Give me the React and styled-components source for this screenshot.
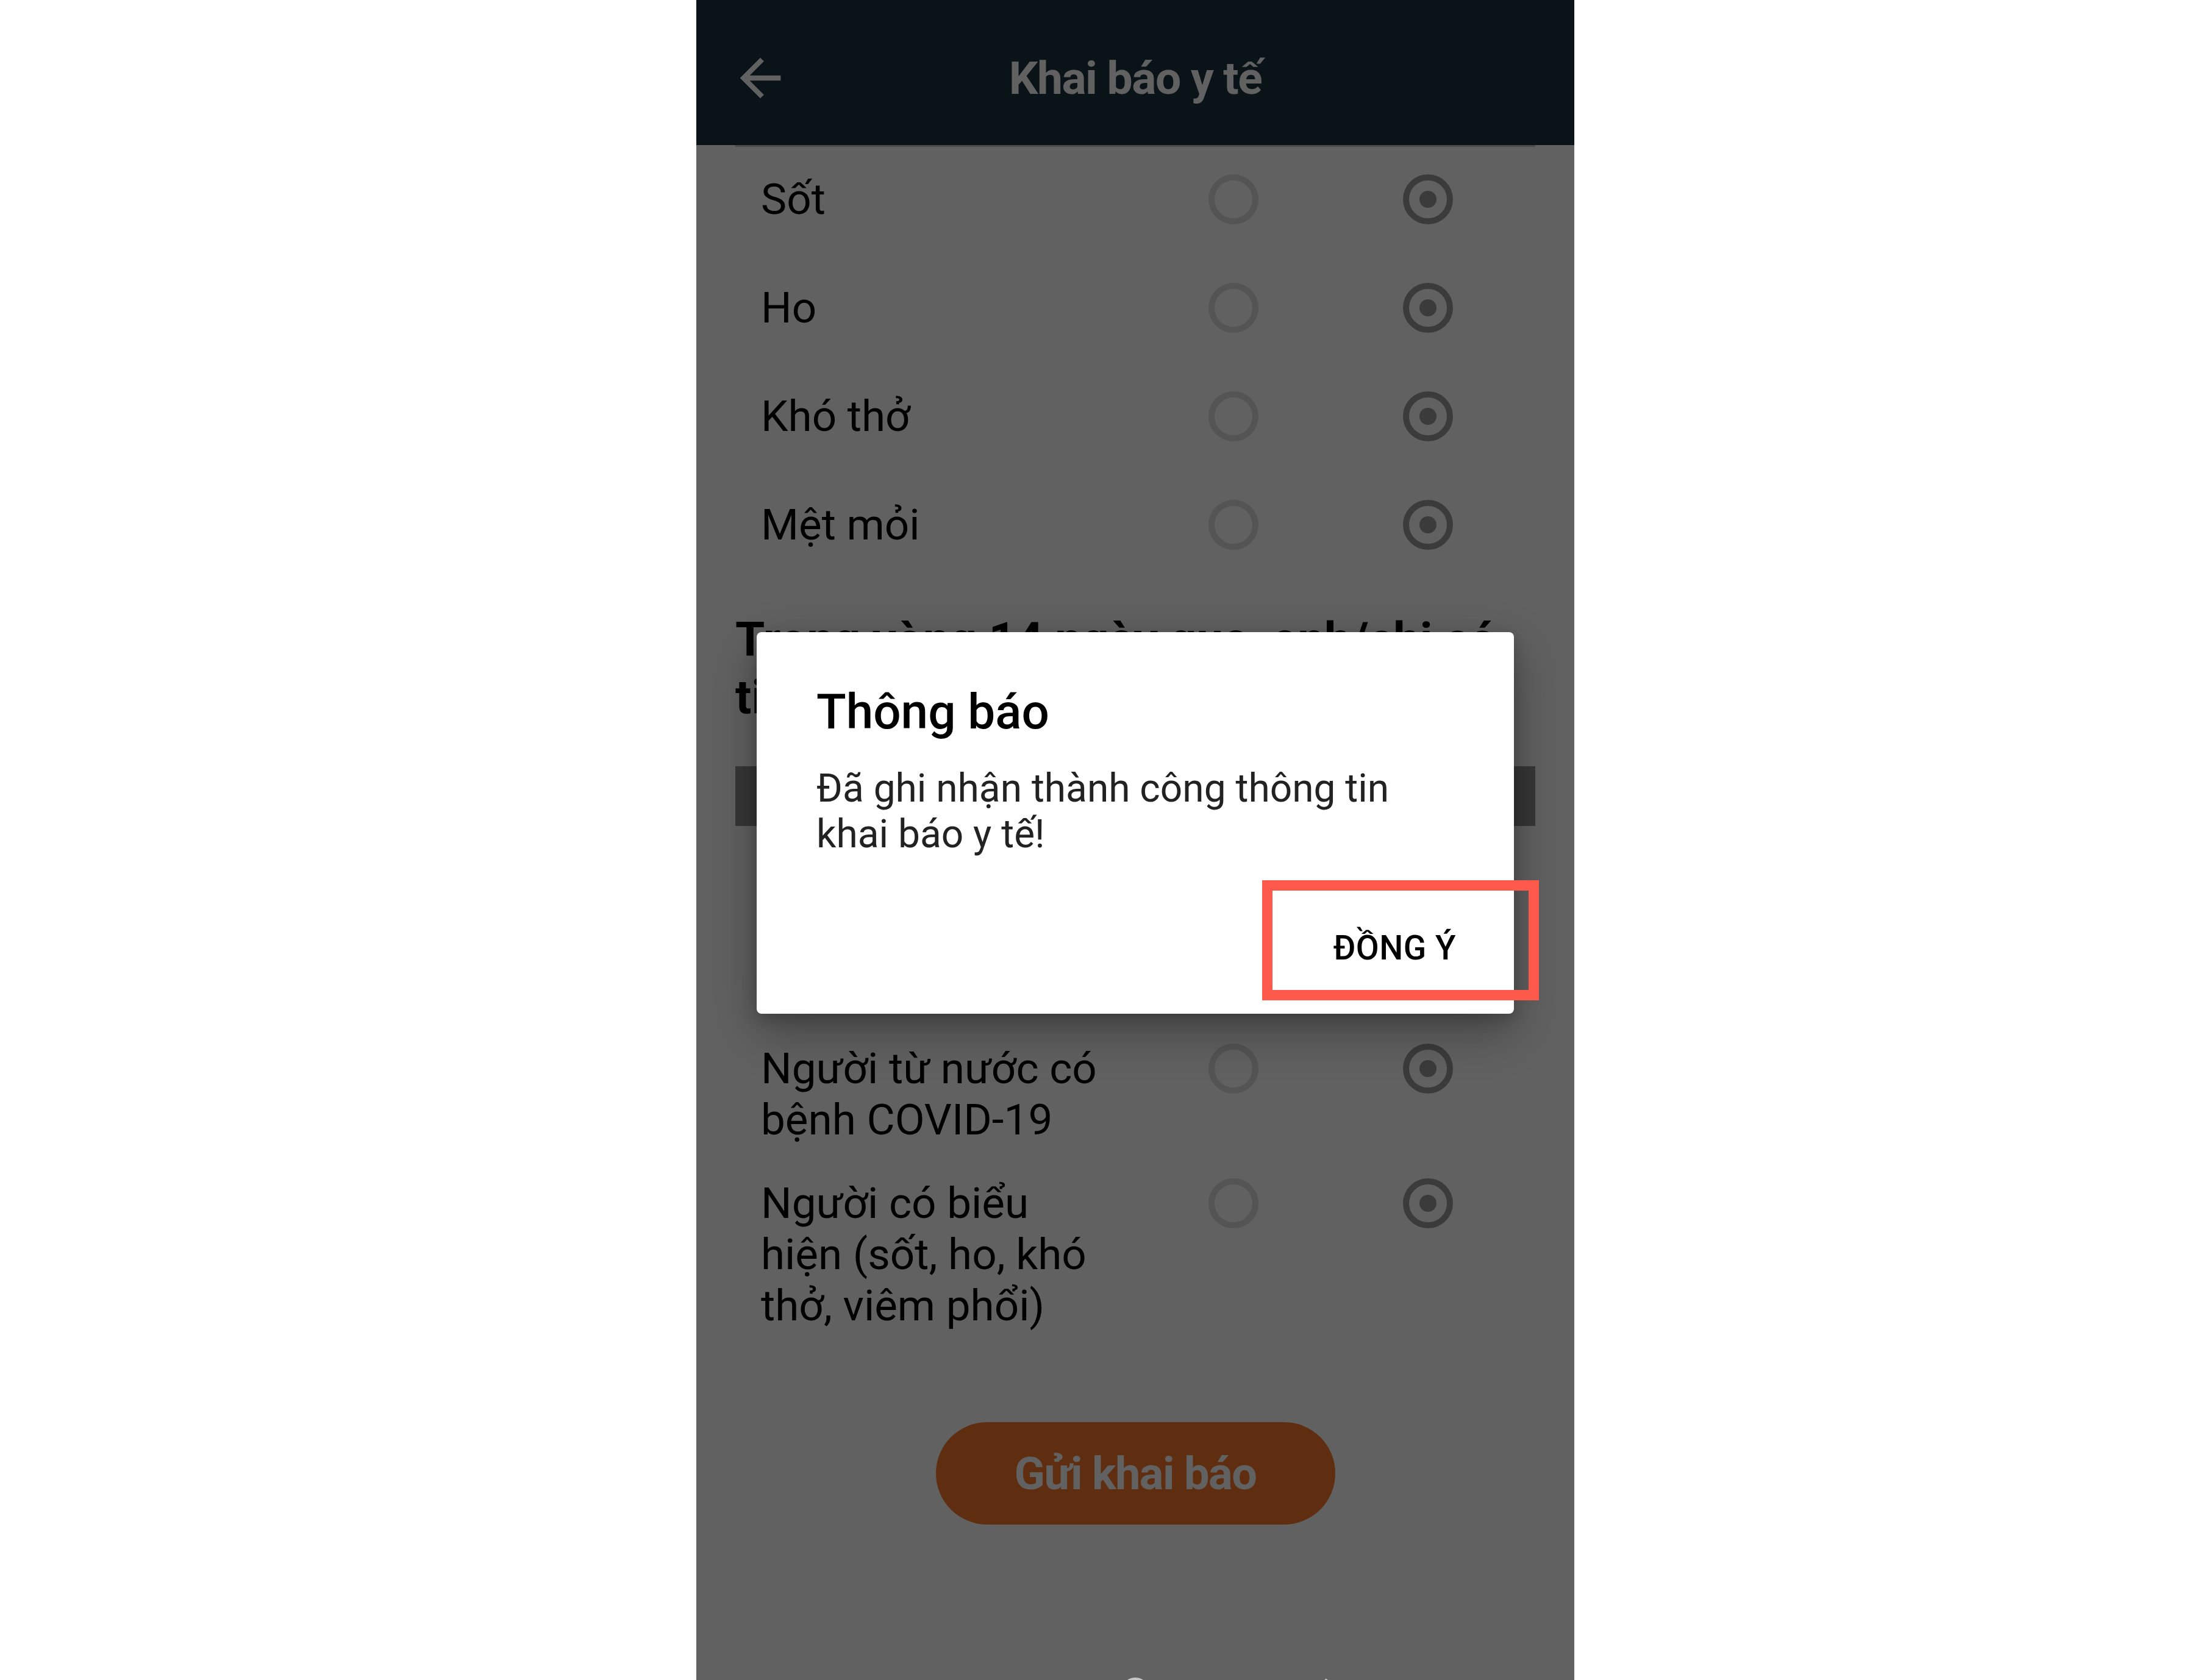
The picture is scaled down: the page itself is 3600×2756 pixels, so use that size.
import React from "react";
import styled, { createGlobalStyle } from "styled-components";

const GlobalStyle = createGlobalStyle`
  body {
    margin: 0;
    background: #ffffff;
    font-family: Roboto, "Noto Sans", "Liberation Sans", sans-serif;
  }
`;

const Screen = styled.div`
  position: relative;
  width: 1440px;
  height: 2756px;
  margin-left: 1142px;
  background: #ffffff;
  overflow: hidden;
  display: flex;
  flex-direction: column;
`;

const AppBar = styled.header`
  height: 238px;
  flex: 0 0 auto;
  background: #1a323f;
  display: grid;
  grid-template-columns: 160px 1fr 160px;
  align-items: center;
  padding-top: 18px;
  box-sizing: border-box;
`;

const BackButton = styled.div`
  padding-left: 55px;
  display: flex;
  align-items: center;
  color: #ffffff;
`;

const Title = styled.h1`
  margin: 0;
  text-align: center;
  color: #ffffff;
  font-size: 75px;
  font-weight: 700;
  letter-spacing: -1.5px;
`;

const Main = styled.main`
  flex: 1;
  min-height: 0;
  padding: 0 64px;
`;

const Divider = styled.div`
  height: 3px;
  margin-bottom: -3px;
  background: #c4c4c4;
`;

const Row = styled.div`
  display: grid;
  grid-template-columns: 615px 319px 319px;
  align-items: start;
  padding-left: 42px;
`;

const Label = styled.div`
  padding: 47px 36px 6px 0;
  font-size: 71px;
  line-height: 84px;
  color: #000000;
`;

const RadioCell = styled.div`
  height: 178px;
  display: flex;
  align-items: center;
  justify-content: center;
`;

const Radio = styled.span`
  width: 82px;
  height: 82px;
  box-sizing: border-box;
  border-radius: 50%;
  border: 10px solid ${(p) => (p.$checked ? "#9c9c9c" : "#dcdcdc")};
  display: flex;
  align-items: center;
  justify-content: center;

  &::after {
    content: "";
    width: 28px;
    height: 28px;
    border-radius: 50%;
    background: ${(p) => (p.$checked ? "#9c9c9c" : "transparent")};
  }
`;

const Heading = styled.h2`
  margin: 53px 0 0;
  font-size: 78px;
  line-height: 94px;
  font-weight: 700;
  color: #000000;
`;

const TableHead = styled.div`
  height: 98px;
  margin: 66px 0 4px;
  background: #919191;
`;

const SubmitWrap = styled.div`
  display: flex;
  justify-content: center;
  margin-top: 143px;
`;

const SubmitButton = styled.button`
  width: 655px;
  height: 168px;
  border: none;
  border-radius: 84px;
  background: #fa792a;
  color: #ffffff;
  font-family: inherit;
  font-size: 74px;
  font-weight: 700;
  letter-spacing: -1.5px;
`;

const NavBar = styled.nav`
  position: relative;
  z-index: 3;
  flex: 0 0 auto;
  height: 126px;
  margin-bottom: -120px;
  display: flex;
  justify-content: space-around;
  align-items: flex-start;
  padding: 0 260px;
`;

const NavIcon = styled.svg`
  width: 60px;
  height: 60px;
  color: #c6c6c6;
`;

const Scrim = styled.div`
  position: absolute;
  inset: 0;
  z-index: 2;
  background: rgba(0, 0, 0, 0.62);
  display: flex;
  align-items: center;
  justify-content: center;
  padding-bottom: 56px;
  box-sizing: border-box;
`;

const Dialog = styled.div`
  position: relative;
  width: 1242px;
  box-sizing: border-box;
  background: #ffffff;
  border-radius: 8px;
  box-shadow: 0 28px 80px rgba(0, 0, 0, 0.32), 0 8px 24px rgba(0, 0, 0, 0.18);
`;

const DialogTitle = styled.div`
  padding: 84px 98px 0;
  font-size: 80px;
  line-height: 94px;
  font-weight: 500;
  color: #000000;
`;

const DialogBody = styled.p`
  margin: 41px 0 0;
  padding: 0 98px;
  font-size: 64px;
  line-height: 75px;
  color: #222222;
`;

const Actions = styled.div`
  display: flex;
  justify-content: flex-end;
  margin-top: 117px;
  padding: 0 95px 76px;
`;

const ActionButton = styled.span`
  font-size: 55px;
  line-height: 64px;
  font-weight: 500;
  letter-spacing: 0.5px;
  color: #000000;
`;

const Highlight = styled.div`
  position: absolute;
  left: 829px;
  top: 407px;
  width: 454px;
  height: 197px;
  box-sizing: border-box;
  border: 17px solid #fe5a4b;
`;

const ArrowBack = () => (
  <svg width="100" height="100" viewBox="0 0 24 24" fill="currentColor">
    <path d="M20 11H7.83l5.59-5.59L12 4l-8 8 8 8 1.41-1.41L7.83 13H20v-2z" />
  </svg>
);

const topQuestions = ["Sốt", "Ho", "Khó thở", "Mệt mỏi"];
const contactQuestions = [
  "Người bệnh hoặc nghi ngờ mắc bệnh COVID-19",
  "Người từ nước có bệnh COVID-19",
  "Người có biểu hiện (sốt, ho, khó thở, viêm phổi)",
];

function Question({ text }) {
  return (
    <Row>
      <Label>{text}</Label>
      <RadioCell>
        <Radio />
      </RadioCell>
      <RadioCell>
        <Radio $checked />
      </RadioCell>
    </Row>
  );
}

export default function App() {
  return (
    <>
      <GlobalStyle />
      <Screen>
        <AppBar>
          <BackButton>
            <ArrowBack />
          </BackButton>
          <Title>Khai báo y tế</Title>
          <div />
        </AppBar>
        <Main>
          <Divider />
          {topQuestions.map((q) => (
            <Question key={q} text={q} />
          ))}
          <Heading>Trong vòng 14 ngày qua, anh/chị có tiếp xúc với:</Heading>
          <TableHead />
          {contactQuestions.map((q) => (
            <Question key={q} text={q} />
          ))}
          <SubmitWrap>
            <SubmitButton>Gửi khai báo</SubmitButton>
          </SubmitWrap>
        </Main>
        <NavBar>
          <NavIcon viewBox="0 0 24 24" fill="none" stroke="currentColor" strokeWidth="2">
            <path d="M6 4v16M12 4v16M18 4v16" />
          </NavIcon>
          <NavIcon viewBox="0 0 24 24" fill="none" stroke="currentColor" strokeWidth="2.4">
            <rect x="4" y="2" width="16" height="20" rx="8" />
          </NavIcon>
          <NavIcon viewBox="0 0 24 24" fill="none" stroke="currentColor" strokeWidth="2">
            <path d="M15 2l-8 10 8 10" />
          </NavIcon>
        </NavBar>
        <Scrim>
          <Dialog>
            <DialogTitle>Thông báo</DialogTitle>
            <DialogBody>
              Đã ghi nhận thành công thông tin khai báo y tế!
            </DialogBody>
            <Actions>
              <ActionButton>ĐỒNG Ý</ActionButton>
            </Actions>
            <Highlight />
          </Dialog>
        </Scrim>
      </Screen>
    </>
  );
}
